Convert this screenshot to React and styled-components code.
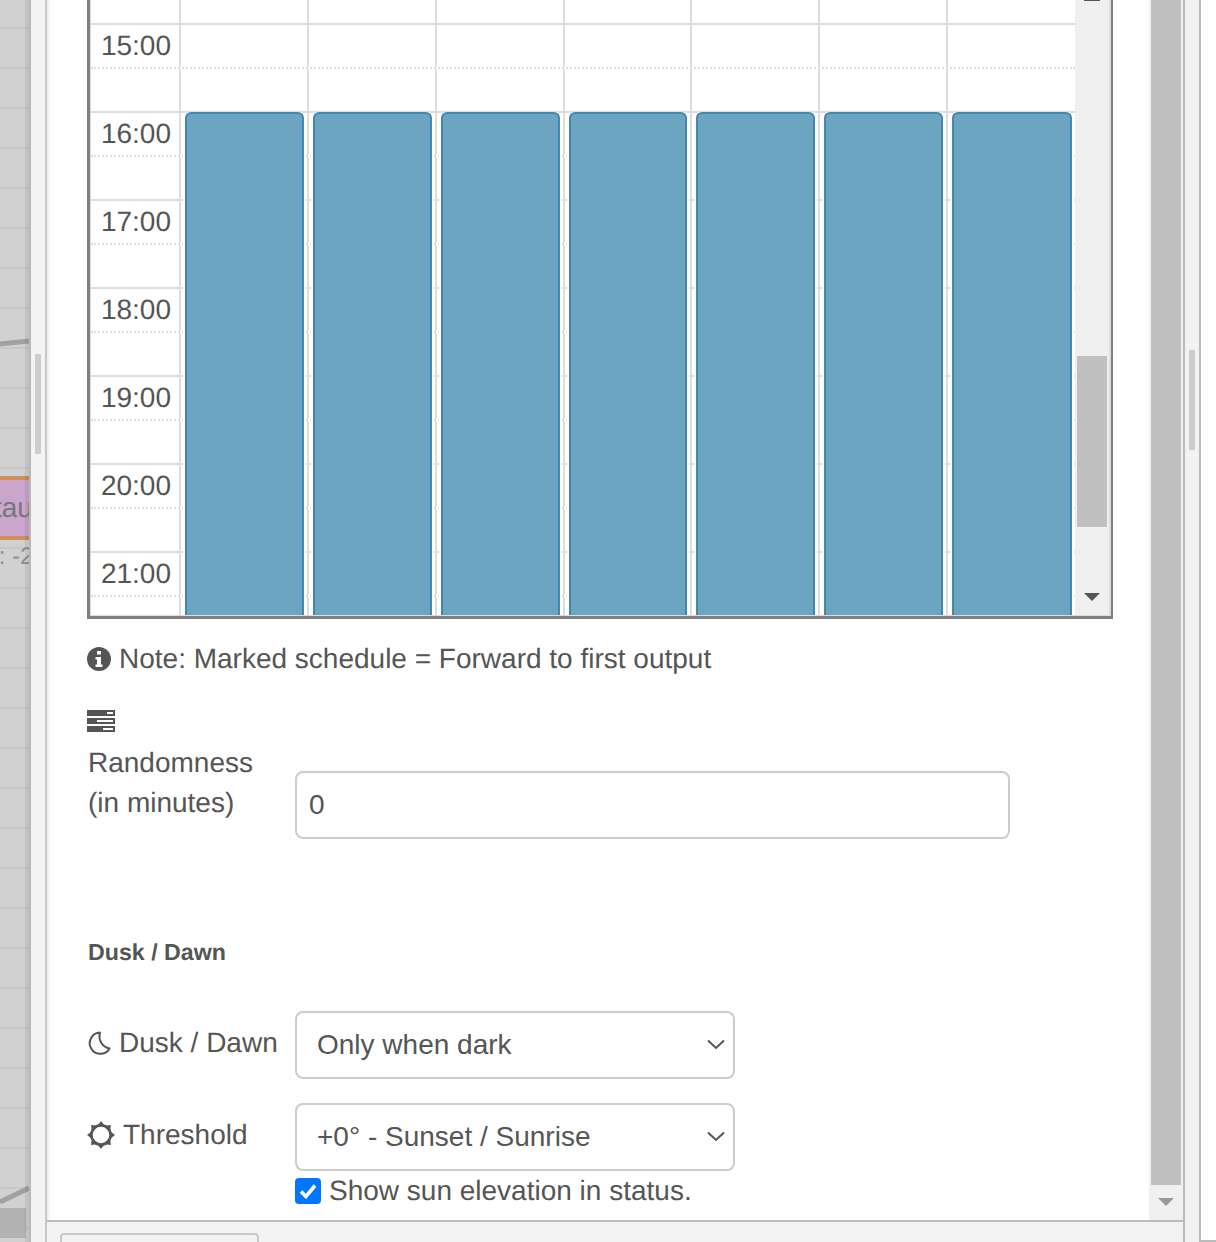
import React from "react";
import styled, { createGlobalStyle } from "styled-components";

const GlobalStyle = createGlobalStyle`
    html, body {
        margin: 0;
        padding: 0;
        background: #fff;
    }
    body {
        font-family: "Liberation Sans", Arial, sans-serif;
        color: #555;
        text-rendering: geometricPrecision;
    }
`;

const Page = styled.div`
    display: flex;
    width: 1216px;
    height: 1242px;
    overflow: hidden;
`;

// workspace canvas sliver on the left, nodes on it sit at free positions
const Canvas = styled.div`
    position: relative;
    flex: none;
    width: 29px;
    overflow: hidden;
    background-color: #d1d1d1;
    background-image: repeating-linear-gradient(
        to bottom,
        transparent 0,
        transparent 27px,
        #c7c7c7 27px,
        #c7c7c7 29px,
        transparent 29px,
        transparent 40px
    );
    &::after {
        content: "";
        position: absolute;
        top: 0;
        right: 0;
        bottom: 0;
        width: 4px;
        background: rgba(0, 0, 0, 0.07);
    }
`;
const Wires = styled.svg`
    position: absolute;
    top: 0;
    left: 0;
`;
const Node = styled.div`
    position: absolute;
    top: 476px;
    left: 0;
    width: 29px;
    height: 64px;
    box-sizing: border-box;
    border-top: 4px solid #d08f58;
    border-bottom: 4px solid #d08f58;
    background: #cba6cc;
    color: #777;
    font-size: 28px;
    line-height: 56px;
    white-space: nowrap;
    text-indent: -6px;
    overflow: hidden;
`;
const NodeStatus = styled.div`
    position: absolute;
    top: 543px;
    left: -8px;
    color: #8e8e8e;
    font-size: 24px;
    line-height: 28px;
    white-space: nowrap;
`;
const DarkBlock = styled.div`
    position: absolute;
    top: 1208px;
    left: 0;
    width: 26px;
    height: 30px;
    background: #b2b2b2;
`;

const Separator = styled.div`
    flex: none;
    display: flex;
    justify-content: center;
    align-items: flex-start;
    width: ${(p) => p.$width}px;
    box-sizing: border-box;
    background: #f3f3f3;
    border-left: ${(p) => p.$left}px solid ${(p) => p.$leftColor};
    border-right: 2px solid ${(p) => p.$rightColor};
`;
const SeparatorGrip = styled.div`
    width: 6px;
    height: 100px;
    margin-top: ${(p) => p.$top}px;
    background: #cdcdcd;
`;

const Editor = styled.div`
    flex: none;
    display: flex;
    flex-direction: column;
    width: 1136px;
    height: 1242px;
`;
const EditorMain = styled.div`
    flex: none;
    display: flex;
    height: 1220px;
    overflow: hidden;
`;
const EditorFooter = styled.div`
    flex: none;
    height: 22px;
    box-sizing: border-box;
    padding: 11px 0 0 13px;
    background: #f3f3f3;
    border-top: 2px solid #bbb;
    overflow: hidden;
`;
const FooterButton = styled.div`
    width: 199px;
    height: 40px;
    box-sizing: border-box;
    background: #f3f3f3;
    border: 2px solid #c8c8c8;
    border-radius: 4px;
`;
const SidePanel = styled.div`
    flex: 1;
    height: 1242px;
    box-sizing: border-box;
    border-bottom: 2px solid #bbb;
`;
const Form = styled.div`
    flex: none;
    width: 1102px;
    box-sizing: border-box;
    padding-left: 40px;
    background: linear-gradient(to right, #ececec 0, #fff 4px);
`;

const PageTrack = styled.div`
    flex: none;
    display: flex;
    flex-direction: column;
    align-items: center;
    width: 34px;
    background: #f0f0f0;
`;
const PageThumb = styled.div`
    width: 30px;
    height: 1185px;
    background: #c0c0c0;
`;
const PageArrow = styled.div`
    margin-top: 13px;
    border-top: 8px solid #999;
    border-left: 8px solid transparent;
    border-right: 8px solid transparent;
`;

const Scheduler = styled.div`
    display: flex;
    width: 1026px;
    height: 619px;
    box-sizing: border-box;
    border-left: 3px solid #808080;
    border-right: 2px solid #808080;
    border-bottom: 3px solid #808080;
`;
const GridViewport = styled.div`
    position: relative;
    flex: none;
    width: 985px;
    box-sizing: border-box;
    border-left: 1px solid #ddd;
    border-bottom: 1px solid #ddd;
    overflow: hidden;
`;
const Row = styled.div`
    display: grid;
    grid-template-columns: 90px repeat(7, 127.86px);
    height: ${(p) => p.$height || 44}px;
    box-sizing: border-box;
    border-bottom: 2px ${(p) => (p.$half ? "dotted" : "solid")} #ddd;
`;
const TimeCell = styled.div`
    border-right: 2px solid #ddd;
    padding-right: 8px;
    font-size: 28px;
    line-height: 42px;
    text-align: right;
`;
const DayCell = styled.div`
    border-right: 2px solid #ddd;
    &:last-child {
        border-right: none;
    }
`;
const EventLayer = styled.div`
    position: absolute;
    top: 112px;
    left: 90px;
    bottom: 0;
    display: grid;
    grid-template-columns: repeat(7, 127.86px);
`;
const Event = styled.div`
    margin: 0 5px 0 4px;
    box-sizing: border-box;
    background: #6ba5c2;
    border: 2px solid #3f88ae;
    border-bottom: none;
    border-radius: 6px 6px 0 0;
    box-shadow: 2px 0 0 #fff, -2px 0 0 #fff;
    &:last-child {
        margin-right: 4px;
    }
`;
const GridTrack = styled.div`
    flex: none;
    display: flex;
    flex-direction: column;
    align-items: center;
    width: 36px;
    box-sizing: border-box;
    background: #f0f0f0;
    border-right: 2px solid #ddd;
    border-bottom: 1px solid #ddd;
`;
const TrackArrowStub = styled.div`
    width: 16px;
    height: 1px;
    background: #555;
`;
const GridThumb = styled.div`
    width: 30px;
    height: 171px;
    margin-top: 355px;
    background: #c0c0c0;
`;
const GridArrow = styled.div`
    margin-top: 66px;
    border-top: 8px solid #555;
    border-left: 8px solid transparent;
    border-right: 8px solid transparent;
`;

const Note = styled.div`
    display: flex;
    align-items: center;
    gap: 8px;
    height: 32px;
    margin-top: 24px;
    font-size: 28px;
    line-height: 32px;
`;
const TasksIcon = styled.svg`
    display: block;
    margin-top: 35px;
`;
const RandomRow = styled.div`
    display: flex;
    align-items: flex-start;
    margin-top: 11px;
`;
const FieldLabel = styled.label`
    flex: none;
    display: flex;
    align-items: center;
    gap: 8px;
    width: 208px;
    margin-top: ${(p) => p.$top || 0}px;
    font-size: 28px;
    line-height: 40px;
`;
const TwoLineLabel = styled(FieldLabel)`
    display: block;
    box-sizing: border-box;
    padding-left: 1px;
`;
const NumberInput = styled.input`
    width: 715px;
    height: 68px;
    margin-top: 28px;
    padding: 0 12px;
    box-sizing: border-box;
    background: #fff;
    border: 2px solid #ccc;
    border-radius: 8px;
    color: #555;
    font-family: inherit;
    font-size: 28px;
    outline: none;
`;
const SectionTitle = styled.div`
    margin-top: 99px;
    padding-left: 1px;
    font-size: 23.2px;
    font-weight: bold;
    line-height: 28px;
`;
const SelectRow = styled.div`
    display: flex;
    align-items: flex-start;
    margin-top: ${(p) => p.$top}px;
`;
const SelectWrap = styled.div`
    position: relative;
    width: 440px;
    height: 68px;
`;
const Select = styled.select`
    appearance: none;
    display: block;
    width: 100%;
    height: 100%;
    padding: 0 20px 2px;
    box-sizing: border-box;
    background: #fff;
    border: 2px solid #ccc;
    border-radius: 8px;
    color: #555;
    font-family: inherit;
    font-size: 28px;
    outline: none;
`;
const Chevron = styled.svg`
    position: absolute;
    top: 28px;
    right: 10px;
    pointer-events: none;
`;
const CheckRow = styled.div`
    display: flex;
    align-items: center;
    gap: 8px;
    height: 40px;
    margin: 0 0 0 208px;
    font-size: 28px;
    line-height: 40px;
`;
const CheckBox = styled.span`
    display: flex;
    align-items: center;
    justify-content: center;
    width: 26px;
    height: 26px;
    border-radius: 4px;
    background: #0075ff;
`;

const HOURS = ["15:00", "16:00", "17:00", "18:00", "19:00", "20:00", "21:00"];
const DAYS = [0, 1, 2, 3, 4, 5, 6];
const SUN_POINTS = [0, 45, 90, 135, 180, 225, 270, 315];

function GridRow({ label, half, height }) {
    return (
        <Row $half={half} $height={height}>
            <TimeCell>{label}</TimeCell>
            {DAYS.map((d) => (
                <DayCell key={d} />
            ))}
        </Row>
    );
}

const InfoIcon = () => (
    <svg width="24" height="24" viewBox="0 0 24 24">
        <path
            fill="#555"
            fillRule="evenodd"
            d="M12 0a12 12 0 1 0 0 24a12 12 0 0 0 0-24z M10 4h4v3.5h-4z M8.5 10h5.5v7.5h1.5v2.5h-7v-2.5h1.5v-5h-1.5z"
        />
    </svg>
);

const MoonIcon = () => (
    <svg width="24" height="24" viewBox="0 0 24 24">
        <path
            d="M13 1.6A10.6 10.6 0 1 0 22.6 17.4A12.4 12.4 0 0 1 13 1.6Z"
            fill="none"
            stroke="#555"
            strokeWidth="2"
            strokeLinejoin="round"
        />
    </svg>
);

const SunIcon = () => (
    <svg width="28" height="28" viewBox="0 0 28 28">
        <circle cx="14" cy="14" r="9.6" fill="none" stroke="#555" strokeWidth="2.6" />
        {SUN_POINTS.map((a) => (
            <path key={a} d="M10.5 4.5L14 0L17.5 4.5Z" fill="#555" transform={`rotate(${a} 14 14)`} />
        ))}
    </svg>
);

const SelectChevron = () => (
    <Chevron width="18" height="11" viewBox="0 0 18 11">
        <path d="M1 1.5 L9 9 L17 1.5" stroke="#555" strokeWidth="2" fill="none" />
    </Chevron>
);

export default function App() {
    return (
        <Page>
            <GlobalStyle />
            <Canvas>
                <Wires width="29" height="1242">
                    <path d="M0 344 L29 341" stroke="#a1a1a1" strokeWidth="5" fill="none" />
                    <path d="M0 1202 L29 1188" stroke="#a1a1a1" strokeWidth="5" fill="none" />
                </Wires>
                <Node>tau</Node>
                <NodeStatus>t: -2</NodeStatus>
                <DarkBlock />
            </Canvas>
            <Separator $width={18} $left={2} $leftColor="#b8b8b8" $rightColor="#c8c8c8">
                <SeparatorGrip $top={354} />
            </Separator>
            <Editor>
                <EditorMain>
                    <Form>
                        <Scheduler>
                            <GridViewport>
                                <GridRow height={25} />
                                {HOURS.map((h) => (
                                    <React.Fragment key={h}>
                                        <GridRow label={h} half />
                                        <GridRow />
                                    </React.Fragment>
                                ))}
                                <EventLayer>
                                    {DAYS.map((d) => (
                                        <Event key={d} />
                                    ))}
                                </EventLayer>
                            </GridViewport>
                            <GridTrack>
                                <TrackArrowStub />
                                <GridThumb />
                                <GridArrow />
                            </GridTrack>
                        </Scheduler>
                        <Note>
                            <InfoIcon />
                            Note: Marked schedule = Forward to first output
                        </Note>
                        <TasksIcon width="28" height="22" viewBox="0 0 28 22">
                            <path
                                fill="#555"
                                fillRule="evenodd"
                                d="M0 0h28v6H0z M20 2v2h6V2z M0 8h28v6H0z M10 10v2h16v-2z M0 16h28v6H0z M16 18v2h10v-2z"
                            />
                        </TasksIcon>
                        <RandomRow>
                            <TwoLineLabel>
                                Randomness
                                <br />
                                (in minutes)
                            </TwoLineLabel>
                            <NumberInput defaultValue="0" />
                        </RandomRow>
                        <SectionTitle>Dusk / Dawn</SectionTitle>
                        <SelectRow $top={45}>
                            <FieldLabel $top={12}>
                                <MoonIcon />
                                Dusk / Dawn
                            </FieldLabel>
                            <SelectWrap>
                                <Select defaultValue="dark">
                                    <option value="dark">Only when dark</option>
                                </Select>
                                <SelectChevron />
                            </SelectWrap>
                        </SelectRow>
                        <SelectRow $top={24}>
                            <FieldLabel $top={12}>
                                <SunIcon />
                                Threshold
                            </FieldLabel>
                            <SelectWrap>
                                <Select defaultValue="0">
                                    <option value="0">+0° - Sunset / Sunrise</option>
                                </Select>
                                <SelectChevron />
                            </SelectWrap>
                        </SelectRow>
                        <CheckRow>
                            <CheckBox>
                                <svg width="18" height="16" viewBox="0 0 18 16">
                                    <path d="M2 8.5 L7 13.5 L16 2.5" stroke="#fff" strokeWidth="3.6" fill="none" />
                                </svg>
                            </CheckBox>
                            Show sun elevation in status.
                        </CheckRow>
                    </Form>
                    <PageTrack>
                        <PageThumb />
                        <PageArrow />
                    </PageTrack>
                </EditorMain>
                <EditorFooter>
                    <FooterButton />
                </EditorFooter>
            </Editor>
            <Separator $width={18} $left={2} $leftColor="#bbb" $rightColor="#bbb">
                <SeparatorGrip $top={350} />
            </Separator>
            <SidePanel />
        </Page>
    );
}
